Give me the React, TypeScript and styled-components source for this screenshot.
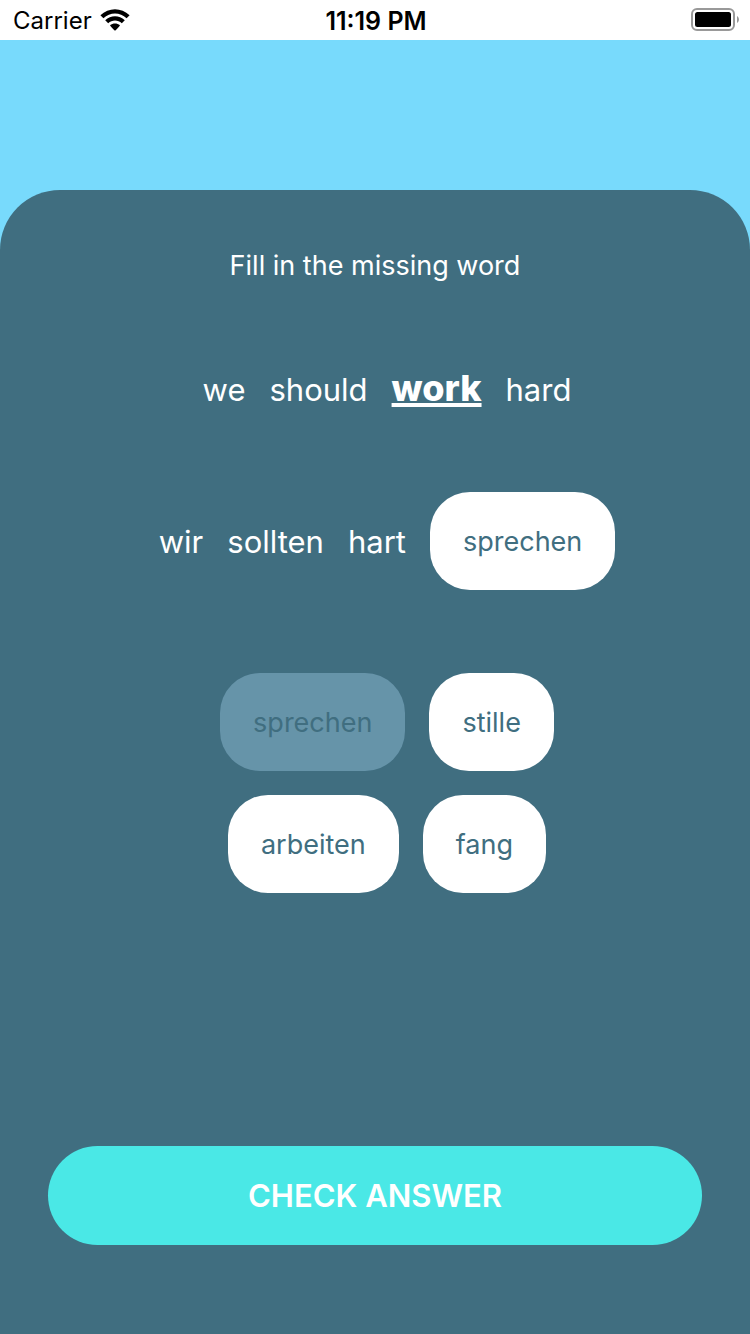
import React, { useState } from "react";
import styled, { createGlobalStyle } from "styled-components";

const GlobalStyle = createGlobalStyle`
  * { box-sizing: border-box; }
  body {
    margin: 0;
    background: #406e80;
    font-family: Inter, "Liberation Sans", sans-serif;
  }
`;

const Screen = styled.div`
  display: flex;
  flex-direction: column;
  min-height: 100vh;
  background: #78dafc;
`;

const StatusBar = styled.header`
  display: grid;
  grid-template-columns: 1fr auto 1fr;
  align-items: center;
  height: 40px;
  padding: 0 11px 0 13px;
  margin-bottom: 150px;
  background: #ffffff;
  color: #000000;
  font-size: 24px;
  line-height: 30px;
`;

const Carrier = styled.div`
  display: flex;
  align-items: center;
  gap: 8px;
`;

const CarrierName = styled.span`
  padding-top: 2px;
`;

const Clock = styled.time`
  padding-top: 2px;
  font-size: 25px;
  font-weight: 600;
`;

const BatteryIcon = styled.svg`
  justify-self: end;
`;

const Panel = styled.main`
  display: flex;
  flex: 1;
  flex-direction: column;
  align-items: center;
  padding: 59px 48px 89px;
  border-radius: 60px 60px 0 0;
  background: #406e80;
  color: #ffffff;
`;

const Title = styled.h1`
  margin: 0 0 86px;
  font-size: 27px;
  font-weight: 400;
  line-height: 34px;
`;

const Sentence = styled.div<{ $align: "baseline" | "center" }>`
  display: flex;
  flex-wrap: wrap;
  align-items: ${({ $align }) => $align};
  justify-content: center;
  gap: 24px;
  margin: 0 0 83px;
  padding-left: 24px;
  font-size: 31px;
  line-height: 39px;
`;

const MissingWord = styled.strong`
  font-size: 36px;
  font-weight: 800;
  text-decoration: underline;
  text-decoration-thickness: 4px;
  text-underline-offset: 2px;
  text-decoration-skip-ink: none;
`;

const Options = styled.div`
  display: flex;
  flex-wrap: wrap;
  justify-content: center;
  gap: 24px;
  max-width: 480px;
  margin-bottom: 48px;
  padding-left: 24px;
`;

const Chip = styled.button<{ $used?: boolean }>`
  padding: 33px 33px 31px;
  border: 0;
  border-radius: 40px;
  background: ${({ $used }) => ($used ? "#6694a9" : "#ffffff")};
  color: #406e80;
  font-family: inherit;
  font-size: 27px;
  line-height: 34px;
`;

const CheckButton = styled.button`
  width: 100%;
  margin-top: auto;
  padding: 30px;
  border: 0;
  border-radius: 50px;
  background: #4ae8e6;
  color: #ffffff;
  font-family: inherit;
  font-size: 31px;
  font-weight: 600;
  line-height: 39px;
`;

const OPTIONS = ["sprechen", "stille", "arbeiten", "fang"];

export default function App() {
  const [answer, setAnswer] = useState("sprechen");

  return (
    <Screen>
      <GlobalStyle />
      <StatusBar>
        <Carrier>
          <CarrierName>Carrier</CarrierName>
          <svg width="30" height="22" viewBox="0 0 30 22" aria-label="Wi-Fi">
            <path d="M0.4 6.3C8.6 -1.7 21.4 -1.7 29.6 6.3L26.6 9.3C20 3 10 3 3.4 9.3Z" />
            <path d="M5.2 11.2C10.8 6 19.2 6 24.8 11.2L21.8 14.2C18 10.7 12 10.7 8.2 14.2Z" />
            <path d="M10 16.3C13 13.9 17 13.9 20 16.3C18.8 18.2 17 20 15 21.8C13 20 11.2 18.2 10 16.3Z" />
          </svg>
        </Carrier>
        <Clock>11:19 PM</Clock>
        <BatteryIcon width="48" height="24" viewBox="0 0 48 24" aria-label="Battery full">
          <rect x="1" y="1" width="42" height="21" rx="5" fill="none" stroke="#999999" strokeWidth="2" />
          <rect x="4" y="4" width="36" height="15" rx="2.5" />
          <path d="M46 8C48.6 9.5 48.6 13.5 46 15Z" fill="#999999" />
        </BatteryIcon>
      </StatusBar>
      <Panel>
        <Title>Fill in the missing word</Title>
        <Sentence $align="baseline" lang="en">
          <span>we</span>
          <span>should</span>
          <MissingWord>work</MissingWord>
          <span>hard</span>
        </Sentence>
        <Sentence $align="center" lang="de">
          <span>wir</span>
          <span>sollten</span>
          <span>hart</span>
          {answer && (
            <Chip type="button" onClick={() => setAnswer("")}>
              {answer}
            </Chip>
          )}
        </Sentence>
        <Options>
          {OPTIONS.map((word) => (
            <Chip
              key={word}
              type="button"
              $used={word === answer}
              disabled={word === answer}
              onClick={() => setAnswer(word)}
            >
              {word}
            </Chip>
          ))}
        </Options>
        <CheckButton type="button">CHECK ANSWER</CheckButton>
      </Panel>
    </Screen>
  );
}
